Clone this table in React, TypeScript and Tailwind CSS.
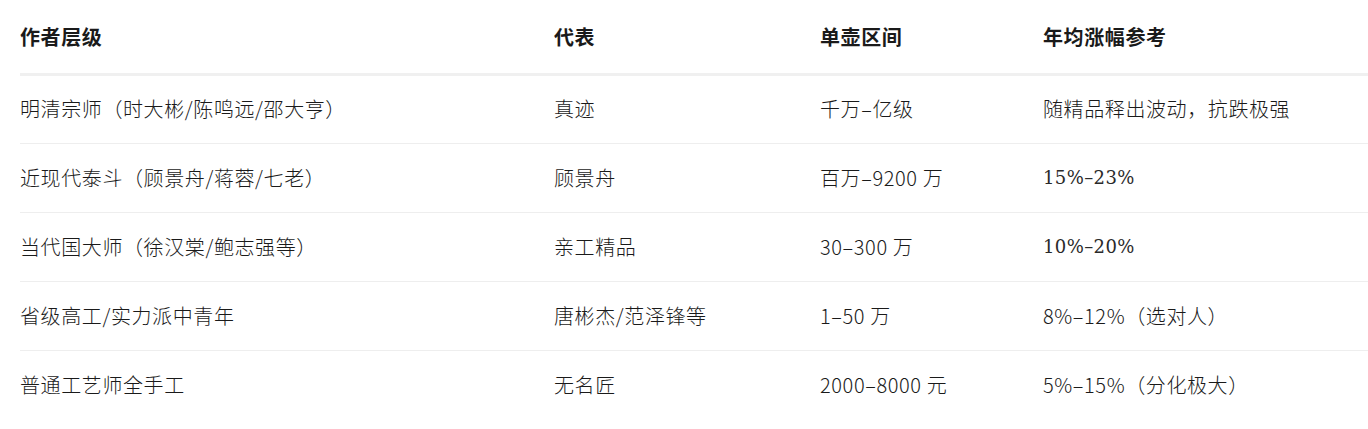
import React from 'react';

const rows = [
  { tier: '明清宗师（时大彬/陈鸣远/邵大亨）', rep: '真迹', price: '千万–亿级', growth: '随精品释出波动，抗跌极强', latin: false },
  { tier: '近现代泰斗（顾景舟/蒋蓉/七老）', rep: '顾景舟', price: '百万–9200 万', growth: '15%–23%', latin: true },
  { tier: '当代国大师（徐汉棠/鲍志强等）', rep: '亲工精品', price: '30–300 万', growth: '10%–20%', latin: true },
  { tier: '省级高工/实力派中青年', rep: '唐彬杰/范泽锋等', price: '1–50 万', growth: '8%–12%（选对人）', latin: false },
  { tier: '普通工艺师全手工', rep: '无名匠', price: '2000–8000 元', growth: '5%–15%（分化极大）', latin: false },
];

export default function App() {
  return (
    <div className="bg-white w-[1368px] h-[429px] overflow-hidden pl-5 text-[#1a1a1a] font-['Noto_Sans_CJK_SC',sans-serif]">
      <table className="w-[1348px] border-collapse text-left text-[20px] leading-[28px] tracking-[0.6px]">
        <thead>
          <tr className="h-[74px] border-b-[3px] border-[#f0f0f0]">
            <th className="w-[534px] p-0 pt-[2px] font-bold">作者层级</th>
            <th className="w-[266px] p-0 pt-[2px] font-bold">代表</th>
            <th className="w-[223px] p-0 pt-[2px] font-bold">单壶区间</th>
            <th className="p-0 pt-[2px] font-bold">年均涨幅参考</th>
          </tr>
        </thead>
        <tbody>
          {rows.map((r, i) => (
            <tr key={r.tier} className={i < rows.length - 1 ? 'h-[69px] border-b border-[#eeeeee]' : 'h-[69px]'}>
              <td className="p-0 font-light">{r.tier}</td>
              <td className="p-0 font-light">{r.rep}</td>
              <td className="p-0 font-light">{r.price}</td>
              <td className={r.latin ? "p-0 font-['DejaVu_Serif',serif] text-[18px] tracking-[0.4px] text-[#2a2a2a]" : 'p-0 font-light'}>{r.growth}</td>
            </tr>
          ))}
        </tbody>
      </table>
    </div>
  );
}
